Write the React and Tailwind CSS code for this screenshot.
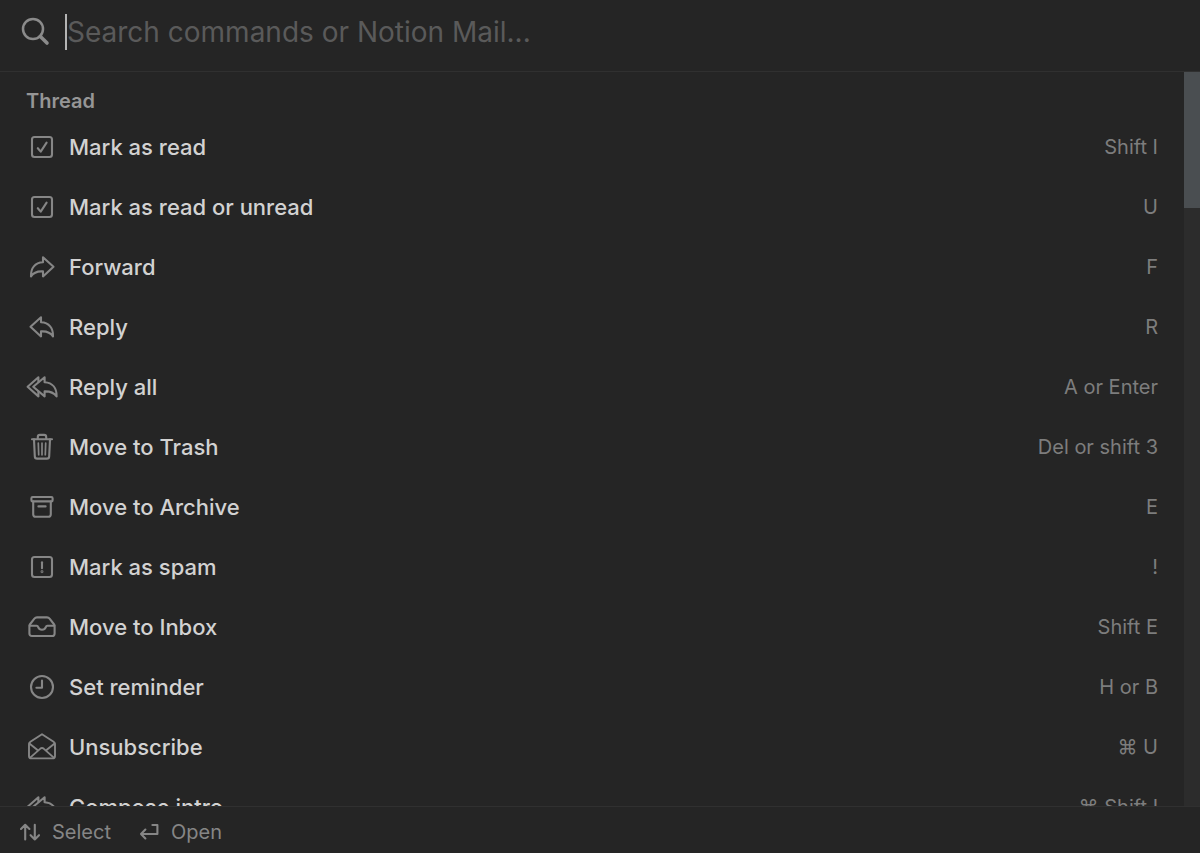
import React, { useState } from "react";

const Icon = ({ children, className = "h-8 w-8", viewBox = "0 0 32 32" }) => (
    <svg
        className={`${className} shrink-0`}
        viewBox={viewBox}
        fill="none"
        stroke="currentColor"
        strokeWidth="2.1"
        strokeLinecap="round"
        strokeLinejoin="round"
        aria-hidden="true"
    >
        {children}
    </svg>
);

const CheckIcon = () => (
    <Icon>
        <rect x="6" y="6" width="20" height="20" rx="2.5" />
        <path d="M11.8 17.2L14.7 20.6L20.6 11.6" />
    </Icon>
);

const ForwardIcon = () => (
    <Icon>
        <path d="M17 6.2L27.5 15.7L17 25.4V20.4C11.2 20 7.6 21.3 5 25.4C4.6 17 9 11.6 17 11.3Z" />
    </Icon>
);

const ReplyIcon = () => (
    <Icon>
        <path d="M15 6.2L4.5 15.7L15 25.4V20.4C20.8 20 24.4 21.3 27 25.4C27.4 17 23 11.6 15 11.3Z" />
    </Icon>
);

const ReplyAllIcon = () => (
    <Icon>
        <path d="M18.6 6.2L7.2 15.7L18.6 25.4V20.4C24 20.2 27.6 21.4 30.6 25.4C30.8 17.4 26.6 11.8 18.6 11.3Z" />
        <path d="M12.4 11V6.2L1.6 15.7L12.4 25.4V20.6" />
    </Icon>
);

const TrashIcon = () => (
    <Icon>
        <path d="M6 8.2H26M11.8 8V6Q11.8 3.9 13.9 3.9H18.1Q20.2 3.9 20.2 6V8" />
        <path d="M8 8.4L8.8 25.4Q8.9 27.6 11.1 27.6H20.9Q23.1 27.6 23.2 25.4L24 8.4" />
        <path d="M12.3 12.2L12.7 23.8M16 12.2V23.8M19.7 12.2L19.3 23.8" strokeWidth="1.7" />
    </Icon>
);

const ArchiveIcon = () => (
    <Icon>
        <rect x="5.4" y="6" width="21.2" height="4.4" rx="1.2" />
        <path d="M7.2 10.6V23.2Q7.2 25.8 9.8 25.8H22.2Q24.8 25.8 24.8 23.2V10.6M12.4 15.4H19.6" />
    </Icon>
);

const SpamIcon = () => (
    <Icon>
        <rect x="6" y="6" width="20" height="20" rx="2.5" />
        <path d="M16 11.2V17.2" />
        <circle cx="16" cy="20.8" r="0.4" />
    </Icon>
);

const InboxIcon = () => (
    <Icon>
        <path d="M3.4 14.6Q3.6 13.8 4.2 13L8.4 7.6Q9.4 6.4 11 6.4H21Q22.6 6.4 23.6 7.6L27.8 13Q28.4 13.8 28.6 14.6V22.4Q28.6 25 26 25H6Q3.4 25 3.4 22.4Z" />
        <path d="M3.8 14.8H10.6Q11.8 14.8 12.2 16.2Q13.2 18.8 16 18.8Q18.8 18.8 19.8 16.2Q20.2 14.8 21.4 14.8H28.2" />
    </Icon>
);

const ClockIcon = () => (
    <Icon>
        <circle cx="16" cy="16" r="11" />
        <path d="M16 9.6V16.8H10.4" />
    </Icon>
);

const EnvelopeIcon = () => (
    <Icon>
        <path d="M3 13.4Q3 11.8 4.4 10.8L16 3.2L27.6 10.8Q29 11.8 29 13.4V25Q29 27.4 26.6 27.4H5.4Q3 27.4 3 25Z" strokeWidth="1.9" />
        <path d="M3.4 12.4L11.8 19.2M28.6 12.4L20.2 19.2M4.2 26.6L14.4 17.6Q16 16.4 17.6 17.6L27.8 26.6" strokeWidth="1.9" />
    </Icon>
);

const commands = [
    { label: "Mark as read", keys: "Shift I", icon: CheckIcon },
    { label: "Mark as read or unread", keys: "U", icon: CheckIcon },
    { label: "Forward", keys: "F", icon: ForwardIcon },
    { label: "Reply", keys: "R", icon: ReplyIcon },
    { label: "Reply all", keys: "A or Enter", icon: ReplyAllIcon },
    { label: "Move to Trash", keys: "Del or shift 3", icon: TrashIcon },
    { label: "Move to Archive", keys: "E", icon: ArchiveIcon },
    { label: "Mark as spam", keys: "!", icon: SpamIcon },
    { label: "Move to Inbox", keys: "Shift E", icon: InboxIcon },
    { label: "Set reminder", keys: "H or B", icon: ClockIcon },
    { label: "Unsubscribe", keys: "⌘ U", icon: EnvelopeIcon },
    { label: "Compose intro", keys: "⌘ Shift I", icon: ReplyAllIcon },
];

const CommandRow = ({ label, keys, icon: RowIcon }) => (
    <li>
        <button type="button" className="flex h-15 w-full items-center gap-[11px] px-[26px] text-left text-[#868686]">
            <RowIcon />
            <span className="flex-1 truncate text-[22px] leading-8 font-medium text-[#d2d2d2]">{label}</span>
            <kbd className="font-[Inter,'DejaVu_Sans',sans-serif] text-xl text-[#7d7d7d]">{keys}</kbd>
        </button>
    </li>
);

const App = () => {
    const [query, setQuery] = useState("");

    return (
        <div className="flex h-screen flex-col overflow-hidden bg-[#252525] font-[Inter,'DejaVu_Sans',sans-serif]">
            <header className="flex h-18 shrink-0 items-center border-b border-[#303030] px-5 pb-2">
                <Icon className="h-8 w-8 text-[#8b8b8b]">
                    <circle cx="13" cy="13" r="10" strokeWidth="2.5" />
                    <path d="M20.4 20.4L27 27" strokeWidth="3.6" />
                </Icon>
                {/* resting caret */}
                <span className="ml-[13px] h-9 w-0.5 bg-[#b4b4b4]" />
                <input
                    type="text"
                    aria-label="Search commands"
                    value={query}
                    onChange={(e) => setQuery(e.target.value)}
                    placeholder="Search commands or Notion Mail..."
                    className="h-10 min-w-0 flex-1 bg-transparent text-[28px] text-[#d6d6d6] outline-none placeholder:text-[#5a5a5a]"
                />
            </header>

            <main className="flex min-h-0 flex-1">
                <section className="min-w-0 flex-1 overflow-hidden">
                    <h2 className="px-[26px] pt-[17px] pb-1 text-xl leading-6 font-semibold text-[#969696]">Thread</h2>
                    <ul>
                        {commands.map((command) => (
                            <CommandRow key={command.label} {...command} />
                        ))}
                    </ul>
                </section>
                <div className="w-4 shrink-0 bg-[#2c2c2c]">
                    <div className="h-34 bg-[#4a4e51]" />
                </div>
            </main>

            <footer className="flex h-[47px] shrink-0 items-center gap-7 border-t border-[#303030] px-5 pt-1 text-xl text-[#868686]">
                <span className="flex items-center gap-3">
                    <Icon className="h-5 w-5" viewBox="0 0 20 20">
                        <path d="M5.2 17.4V2.8M1 7L5.2 2.8L9.4 7M14.8 2.8V17.4M10.6 13.2L14.8 17.4L19 13.2" />
                    </Icon>
                    Select
                </span>
                <span className="flex items-center gap-3">
                    <Icon className="h-5 w-5" viewBox="0 0 20 20">
                        <path d="M13.4 3H18.4V12H2M6.4 7.6L2 12L6.4 16.4" />
                    </Icon>
                    Open
                </span>
            </footer>
        </div>
    );
};

export default App;
